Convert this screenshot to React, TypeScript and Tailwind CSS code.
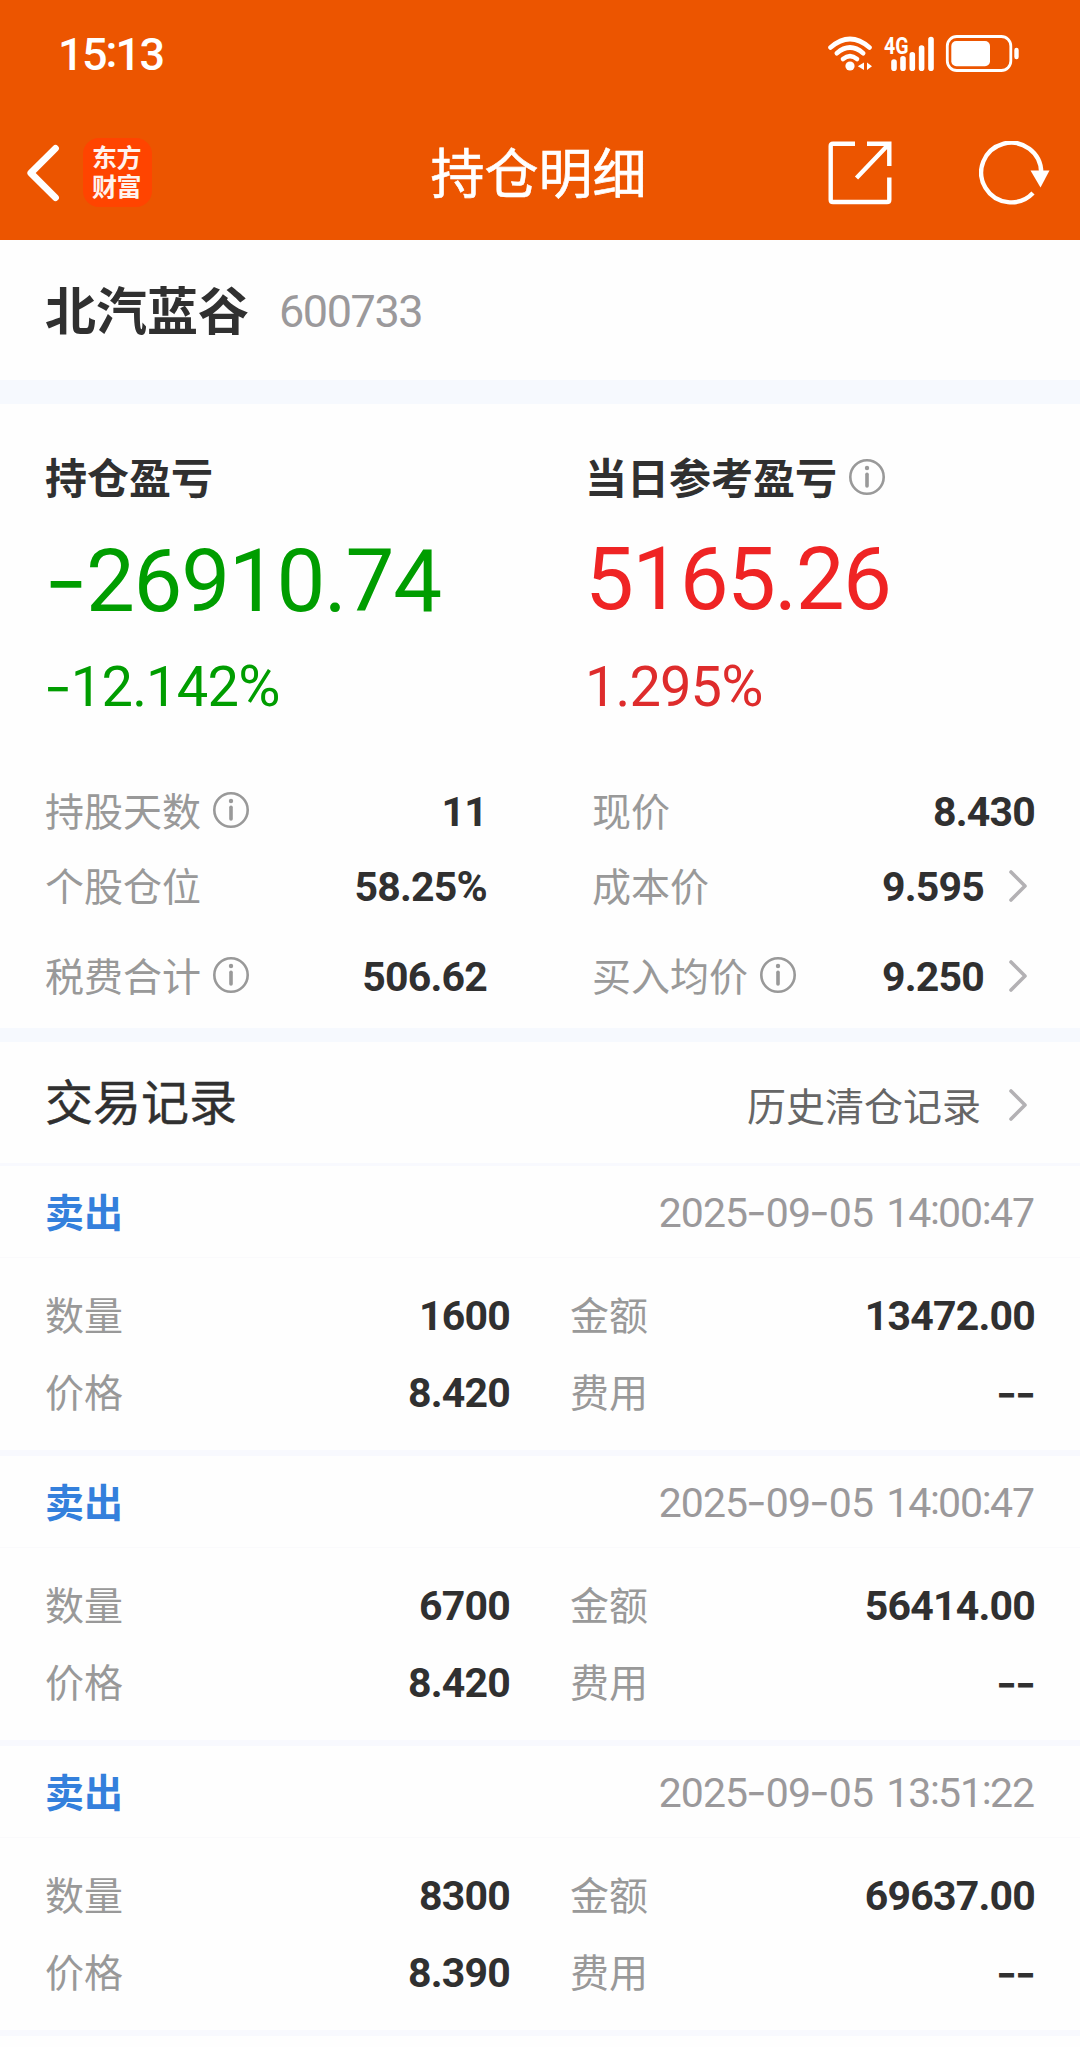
import type { ReactNode } from "react";

/* Digits are set in Roboto with tightened tracking; hyphens use Inter's wider dash. */
function Num({ children, className = "" }: { children: string; className?: string }) {
  const parts = children.split(/([-:%])/);
  return (
    <span className={`whitespace-pre font-['Roboto','Noto_Sans_CJK_SC',sans-serif] [word-spacing:0.1em] ${className}`}>
      {parts.map((p, i) =>
        p === "-" ? (
          <span key={i} className="relative top-[0.015em] inline-block origin-center scale-x-[1.1] scale-y-[0.95] font-['Inter',sans-serif] tracking-normal">-</span>
        ) : p === ":" ? (
          <span key={i} className="relative -top-[0.06em] left-[-0.01em] tracking-[-0.055em]">:</span>
        ) : p === "%" ? (
          <span key={i} className="text-[1.03em]">%</span>
        ) : (
          p
        ),
      )}
    </span>
  );
}

function InfoIcon({ className = "" }: { className?: string }) {
  return (
    <svg className={`size-9 shrink-0 text-[#999999] ${className}`} viewBox="0 0 36 36" fill="none" stroke="currentColor">
      <circle cx="18" cy="18" r="16.7" strokeWidth="2.6" />
      <circle cx="18" cy="9" r="2.2" fill="currentColor" stroke="none" />
      <path d="M18 15.2V27" strokeWidth="3.6" strokeLinecap="round" />
    </svg>
  );
}

function Chevron({ className = "" }: { className?: string }) {
  return (
    <svg className={`h-8 w-[18px] shrink-0 ${className}`} viewBox="0 0 18 32" fill="none" stroke="#b3b1b4" strokeWidth="3.6" strokeLinecap="round" strokeLinejoin="round">
      <path d="M2 2L16 16L2 30" />
    </svg>
  );
}

function Label({ children, className = "" }: { children: ReactNode; className?: string }) {
  return <span className={`pb-[5px] text-[39px] leading-[50px] text-[#999999] ${className}`}>{children}</span>;
}

function StatusBar() {
  return (
    <div className="flex h-[109px] items-center justify-between pr-[61px] pl-[58px]">
      <Num className="text-[45px] leading-none font-medium tracking-[-0.035em]">15:13</Num>
      <svg className="mb-0.5 h-10 w-[192px]" viewBox="826 34 192 40" fill="none" stroke="#fff">
        <g strokeWidth="4.6" strokeLinecap="round">
          <path d="M829.500 47.500Q849 30.500 868.500 47.500" />
          <path d="M835.800 53.200Q849 41.800 862.200 53.200" />
          <path d="M842 59Q849 53.200 856 59" />
        </g>
        <circle cx="849" cy="66" r="4.600" fill="#fff" stroke="none" />
        <path d="M863 62.500V70L856.800 66.300zM866 62.500V70L871 66.300z" fill="#fff" stroke="none" />
        <text x="883" y="53.600" fill="#fff" stroke="none" fontSize="23" fontWeight="700" textLength="24.500" lengthAdjust="spacingAndGlyphs" fontFamily="Roboto, sans-serif">4G</text>
        <path d="M893 62V68.200M902 58.800V68.200M911.300 54.800V68.200M920.600 48V68.200M930 39.500V68.200" strokeWidth="5.600" strokeLinecap="round" />
        <rect x="946.300" y="36.500" width="63.500" height="34" rx="9.500" strokeWidth="2.800" />
        <rect x="950.300" y="41" width="38.700" height="25.200" rx="5" fill="#fff" stroke="none" />
        <rect x="1013.300" y="47.700" width="4.400" height="11.600" rx="2.200" fill="#fff" stroke="none" />
      </svg>
    </div>
  );
}

function NavBar() {
  return (
    <div className="grid h-[131px] grid-cols-[1fr_auto_1fr] items-center pr-[29px] pb-1 pl-[26px]">
      <div className="flex items-center">
        <svg className="h-[58px] w-9" viewBox="0 0 36 58" fill="none" stroke="#fff" strokeWidth="6.800" strokeLinecap="round" strokeLinejoin="round">
          <path d="M29.500 4.300L4.800 29L29.500 53.700" />
        </svg>
        <div className="ml-[21px] flex size-[69px] flex-col items-center justify-center rounded-[16px] bg-[#ff4400] pr-[2px] pb-[3px] text-[25px] leading-[29px] font-bold tracking-[-0.5px] text-[#fff3ee]">
          <span>东方</span>
          <span>财富</span>
        </div>
      </div>
      <h1 className="pb-[3px] text-[54px] leading-[70px] [-webkit-text-stroke:0.6px_currentColor]">持仓明细</h1>
      <div className="flex items-center justify-end">
        <svg className="size-16" viewBox="0 0 64 64" fill="none" stroke="#fff" strokeWidth="4.400">
          <path d="M27 2.700H5Q2.700 2.700 2.700 5V58.700Q2.700 61 5 61H59Q61.300 61 61.300 58.700V36.500" />
          <path d="M39 2.700H61.300V25M60 4L28.500 37" />
        </svg>
        <svg className="ml-[87px] h-16 w-[72px]" viewBox="0 0 72 64" fill="none">
          <path d="M62.200 31.500A30 29.800 0 1 0 54 52" stroke="#fff" strokeWidth="4.400" />
          <path d="M51.500 29.500H70.500L61.500 46.500z" fill="#fff" />
        </svg>
      </div>
    </div>
  );
}

function Value({ children }: { children: string }) {
  return <Num className="ml-auto pt-0.5 text-[41px] leading-none font-bold tracking-[-0.019em] text-[#303030]">{children}</Num>;
}

function Metric({ label, value, info, link }: { label: string; value: string; info?: boolean; link?: boolean }) {
  return (
    <div className="flex h-full items-center">
      <Label>{label}</Label>
      {info && <InfoIcon className="mb-0.5 ml-3" />}
      <Value>{value}</Value>
      {link && <Chevron className="mr-2 ml-[25px]" />}
    </div>
  );
}

const METRICS = [
  { height: "h-[74px]", left: { label: "持股天数", value: "11", info: true }, right: { label: "现价", value: "8.430" } },
  { height: "h-[76px]", left: { label: "个股仓位", value: "58.25%" }, right: { label: "成本价", value: "9.595", link: true } },
  { height: "h-[104px]", left: { label: "税费合计", value: "506.62", info: true }, right: { label: "买入均价", value: "9.250", info: true, link: true } },
];

const TRADES = [
  { time: "2025-09-05 14:00:47", qty: "1600", price: "8.420", amount: "13472.00" },
  { time: "2025-09-05 14:00:47", qty: "6700", price: "8.420", amount: "56414.00" },
  { time: "2025-09-05 13:51:22", qty: "8300", price: "8.390", amount: "69637.00" },
];

function Trade({ time, qty, price, amount }: (typeof TRADES)[number]) {
  const cells = [["数量", qty], ["金额", amount], ["价格", price], ["费用", "--"]];
  return (
    <section className="h-[290px] border-b-[6px] border-[#f8f9fe]">
      <div className="flex h-[92px] items-center justify-between border-b border-[#fafafc] px-[45px]">
        <span className="pb-[3px] text-[39px] leading-[50px] font-bold text-[#3480dc]">卖出</span>
        <Num className="mr-px pt-0.5 text-[41px] leading-none tracking-[-0.024em] text-[#9b999b]">{time}</Num>
      </div>
      <div className="grid grid-cols-[465px_1fr] gap-x-[60px] px-[45px] pt-[19px]">
        {cells.map(([k, v]) => (
          <div key={k} className="flex h-[77px] items-center">
            <Label>{k}</Label>
            <Value>{v}</Value>
          </div>
        ))}
      </div>
    </section>
  );
}

export default function App() {
  return (
    <main className="h-[2047px] w-[1080px] overflow-hidden bg-[#fefefe] font-['Noto_Sans_CJK_SC',sans-serif] text-[#303030]">
      <header className="h-60 bg-[#ec5500] text-white">
        <StatusBar />
        <NavBar />
      </header>

      <section className="flex h-[140px] items-center pl-[45px]">
        <span className="pb-1 text-[51px] leading-[64px] font-bold">北汽蓝谷</span>
        <Num className="ml-[30px] pt-0.5 text-[45px] leading-none tracking-[-0.032em] text-[#9b999b]">600733</Num>
      </section>
      <div className="h-6 bg-[#f6f9fe]" />

      <section className="h-[624px] px-[45px] pt-[46px]">
        <div className="grid grid-cols-[540px_1fr]">
          <div className="text-[#009d00]">
            <h2 className="h-14 text-[42px] leading-[52px] font-bold text-[#303030]">持仓盈亏</h2>
            <Num className="block h-[146px] pl-px text-[87px] leading-[147px] tracking-[-0.015em]">-26910.74</Num>
            <Num className="block h-[68px] text-[56px] leading-[69px] tracking-[-0.014em]">-12.142%</Num>
          </div>
          <div className="text-[#ef2424]">
            <div className="flex h-14 items-start text-[#303030]">
              <h2 className="text-[42px] leading-[52px] font-bold">当日参考盈亏</h2>
              <InfoIcon className="mt-[9px] ml-3" />
            </div>
            <Num className="block h-[146px] text-[87px] leading-[147px] tracking-[-0.018em]">5165.26</Num>
            <Num className="block h-[68px] text-[56px] leading-[69px] tracking-[-0.016em] text-[#de2c2c]">1.295%</Num>
          </div>
        </div>
        <div className="pt-[54px]">
          {METRICS.map((m) => (
            <div key={m.left.label} className={`grid grid-cols-[442px_1fr] gap-x-[105px] ${m.height}`}>
              <Metric {...m.left} />
              <Metric {...m.right} />
            </div>
          ))}
        </div>
      </section>
      <div className="h-3.5 bg-[#f6f9fe]" />

      <section>
        <div className="flex h-[124px] items-center border-b-[3px] border-[#f8f9fe] pr-[53px] pl-[45px]">
          <h2 className="pb-[7px] text-[48px] leading-[60px] [-webkit-text-stroke:0.4px_currentColor]">交易记录</h2>
          <span className="mt-0.5 mr-7 ml-auto text-[39px] leading-[50px] text-[#666666]">历史清仓记录</span>
          <Chevron className="mt-1" />
        </div>
        {TRADES.map((t, i) => (
          <Trade key={i} {...t} />
        ))}
      </section>
    </main>
  );
}
